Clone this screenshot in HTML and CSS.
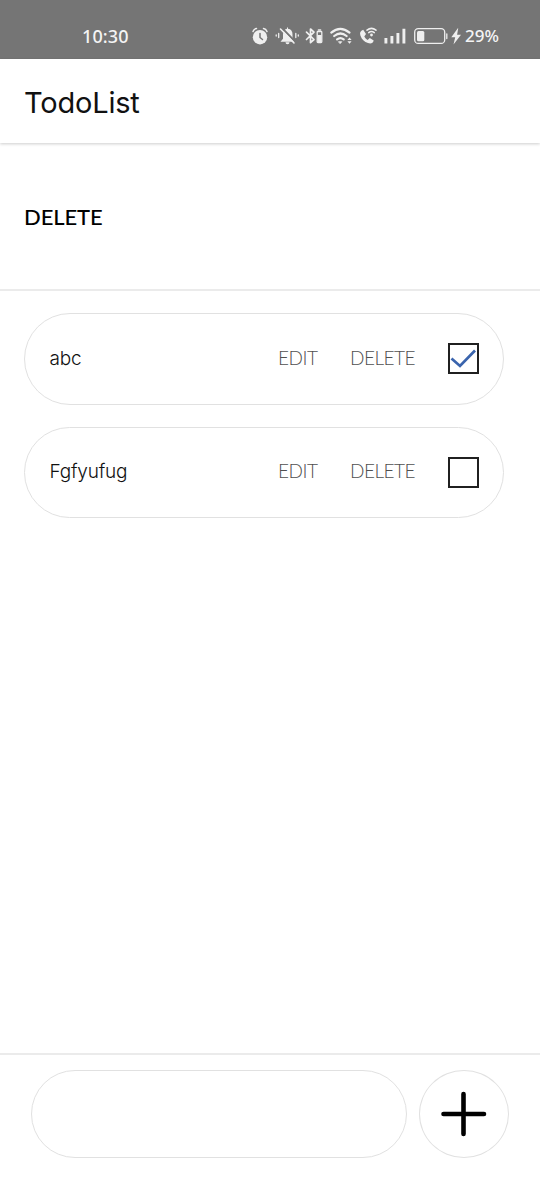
FILE: index.html
```html
<!DOCTYPE html>
<html lang="en">
<head>
<meta charset="utf-8">
<title>TodoList</title>
<link rel="stylesheet" href="styles.css">
</head>
<body>
<div class="screen">
  <div class="status">
    <span class="time">10:30</span>
    <svg class="status-icons" width="212" height="24" viewBox="250 24 212 24" fill="none" stroke="#efefef" stroke-linecap="round" stroke-linejoin="round">
      <circle cx="260" cy="37.200" r="7.200" fill="#efefef" stroke="none"/>
      <path d="M253 31.500q1-2.600 3.500-3M267 31.500q-1-2.600-3.500-3" stroke-width="1.500"/>
      <path d="M260 33.500v4l2.500 2" stroke="#757575" stroke-width="1.500"/>
      <path d="M280.500 41.700l2.500-3v-4.200c0-3.500 2-5.500 4-5.700v-1.200h1v1.200c3 .3 4.500 2.600 4.500 5.700v4.200l2 3z" fill="#efefef" stroke="none"/>
      <path d="M285.500 42.300a2 2 0 0 0 4 0z" fill="#efefef" stroke="none"/>
      <path d="M282 28l14 14.500" stroke="#757575" stroke-width="1.800"/>
      <path d="M280.500 29l13.500 14" stroke-width="1.600"/>
      <path d="M278.700 33.500v4M276.200 35v1M295.800 33.500v4M298.300 35v1" stroke-width="1.300"/>
      <path d="M306.500 32.200l7.500 7.300-3.500 3.200V29l3.500 3.200-7.500 7.300" stroke-width="1.700"/>
      <rect x="317.200" y="31.500" width="4.600" height="11" rx=".8" stroke-width="1.300"/>
      <rect x="317.500" y="35" width="4" height="7.300" fill="#efefef" stroke="none"/>
      <path d="M318.500 30h2" stroke-width="1.600"/>
      <path d="M331.300 32.600q9-7.600 18.200 0M334.200 36q6.200-5 12.400 0M337.100 39.300q3.300-2.500 6.600 0" stroke-width="2.200"/>
      <path d="M338.800 41.700h3l-1.500 1.700z" fill="#efefef" stroke-width=".8"/>
      <path d="M347.400 39.900h4.200l-2.100-2.500zM347.400 41.300h4.200l-2.100 2.500z" fill="#efefef" stroke="none"/>
      <path d="M363.200 29.800c-2.900.9-3.700 2.900-2.800 5.800 1.300 3.800 3.900 6.500 7.600 7.500 3 .9 5.100.1 5.700-2.600l-3.900-2.500-2.200 1.900c-1.500-.8-2.500-1.900-3.300-3.500l1.700-2.300z" fill="#efefef" stroke="none"/>
      <path d="M367 30.200q4.500-3.700 9 0M368.700 32.600q2.800-2.200 5.600 0" stroke-width="1.500"/>
      <circle cx="371.500" cy="35" r="1.400" fill="#efefef" stroke="none"/>
      <path d="M385.900 38v5.500M391.900 36v7.500M397.900 33v10.500M403.900 28.700v14.800" stroke-width="2.900" stroke-linecap="butt"/>
      <rect x="414.700" y="28.700" width="30" height="14.700" rx="3.500" stroke-width="1.300"/>
      <rect x="417" y="31" width="7.300" height="10.300" rx="1.500" fill="#efefef" stroke="none"/>
      <path d="M446.800 34v4.500" stroke-width="1.300"/>
      <path d="M457.800 28.200l-6.500 9h3.900l-1.700 7.200 7.500-9.600h-3.900l1.100-6.600z" fill="#efefef" stroke="none"/>
    </svg>
    <span class="percent">29%</span>
  </div>
  <header class="app-bar"><span class="app-title">TodoList</span></header>
  <div class="toolbar"><span class="delete-all">DELETE</span></div>
  <main class="list">
    <div class="item">
      <span class="name">abc</span>
      <span class="edit">EDIT</span>
      <span class="delete">DELETE</span>
      <span class="check"><svg class="tick" width="27" height="26" viewBox="0 0 27 26"><path d="M1.500 13.500l8.500 7.500L25 5.500" fill="none" stroke="#3a64ad" stroke-width="2.700"/></svg></span>
    </div>
    <div class="item">
      <span class="name">Fgfyufug</span>
      <span class="edit">EDIT</span>
      <span class="delete">DELETE</span>
      <span class="check"></span>
    </div>
  </main>
  <footer class="composer">
    <div class="field"></div>
    <div class="add"><svg width="46" height="46" viewBox="0 0 46 46"><path d="M22.500 3v40M2.500 23h40.500" stroke="#000" stroke-width="4.600" stroke-linecap="round"/></svg></div>
  </footer>
</div>
</body>
</html>
```
FILE: styles.css
```css
* { box-sizing: border-box; }
body { margin: 0; background: #fff; font-family: Lato, sans-serif; color: #111; }
span { white-space: nowrap; }
.screen { width: 540px; height: 1200px; display: flex; flex-direction: column; overflow: hidden; }
.status { height: 59px; flex: none; background: #757575; color: #f4f4f4; display: flex; padding: 24px 0 0 82px; font: 500 18px/24px "Noto Sans", sans-serif; }
.time { width: 168px; letter-spacing: 0.1px; }
.status-icons { flex: none; }
.percent { padding-left: 3px; font-size: 17px; }
.app-bar { height: 84px; flex: none; padding: 26px 24px; box-shadow: 0 1px 3px rgba(0,0,0,.2); font: 400 29px/36px Inter, sans-serif; }
.app-title { letter-spacing: -0.2px; }
.toolbar { height: 148px; flex: none; padding: 60px 24px; border-bottom: 2px solid #ebebeb; color: #000; font: 500 22px/28px Lato, sans-serif; }
.delete-all { letter-spacing: -0.1px; }
.list { flex: 1; display: flex; flex-direction: column; gap: 22px; padding: 22px 36px 0 24px; }
.item { height: 91.500px; border: 1.500px solid #e1e1e1; border-radius: 46px; display: flex; align-items: center; padding: 0 24px; font-size: 19px; line-height: 24px; }
.name { width: 228px; padding-left: 0.5px; font-family: Inter, sans-serif; font-weight: 300; letter-spacing: -0.2px; }
.edit { width: 72px; }
.delete { width: 99px; }
.edit, .delete { padding: 0 0 2px 1px; font-weight: 300; color: #505050; letter-spacing: -0.5px; }
.check { width: 31px; height: 31px; flex: none; border: 2px solid #202020; }
.tick { display: block; }
.composer { height: 147px; flex: none; border-top: 2px solid #ebebeb; display: flex; gap: 12px; padding: 15px 31px; }
.field { width: 376px; height: 88px; border: 1.500px solid #e1e1e1; border-radius: 45px; }
.add { width: 90px; height: 88px; border: 1.500px solid #e1e1e1; border-radius: 50%; display: flex; align-items: center; justify-content: center; }
```
